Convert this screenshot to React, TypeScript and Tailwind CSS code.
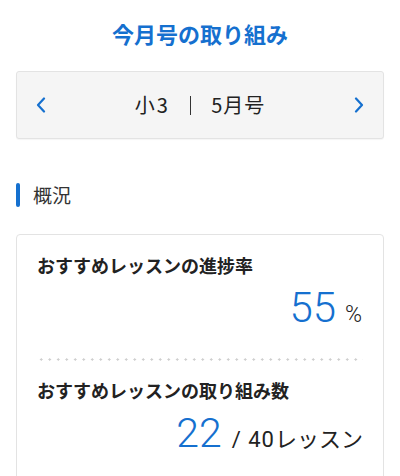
import React from 'react';

const jp = 'font-["Noto_Sans_CJK_JP","Noto_Sans",sans-serif]';
const num = 'font-["Roboto","Liberation_Sans",sans-serif]';

const Chevron: React.FC<{ dir: 'left' | 'right' }> = ({ dir }) => (
  <svg width="10" height="16" viewBox="0 0 10 16" fill="none">
    <polyline
      points={dir === 'left' ? '8,1.5 2,8 8,14.5' : '2,1.5 8,8 2,14.5'}
      stroke="#1570cf"
      strokeWidth="2.2"
      strokeLinecap="round"
      strokeLinejoin="round"
    />
  </svg>
);

const Stat: React.FC<{ label: string; children: React.ReactNode }> = ({ label, children }) => (
  <div>
    <div className={`${jp} text-[18px] font-bold leading-[26px] text-[#222]`}>{label}</div>
    {children}
  </div>
);

export default function App() {
  return (
    <div className={`${jp} min-h-[476px] w-[400px] bg-white px-4`}>
      <h1 className="pt-[17px] text-center text-[22px] font-bold leading-[32px] text-[#1570cf]">
        今月号の取り組み
      </h1>

      <div className="mt-[22px] flex h-[68px] items-center justify-between rounded-[3px] border border-[#e3e3e3] bg-[#f5f5f5] px-[19px] shadow-[0_1px_1px_rgba(0,0,0,0.04)]">
        <Chevron dir="left" />
        <div className="flex items-center gap-[20px] text-[20px] text-[#222]">
          <span className="tracking-[2px]">小3</span>
          <span className="h-[19px] w-[1.5px] bg-[#333]" />
          <span className="tracking-[1px]">5月号</span>
        </div>
        <Chevron dir="right" />
      </div>

      <div className="mt-[44px] flex items-center gap-[13px]">
        <span className="h-6 w-1 rounded-full bg-[#1570cf]" />
        <span className="text-[19px] leading-6 text-[#333]">概況</span>
      </div>

      <section className="mt-[27px] rounded-[4px] border border-[#e3e3e3] px-5 pt-[17px] pb-6">
        <Stat label="おすすめレッスンの進捗率">
          <div className="mt-[9px] flex items-baseline justify-end pr-[1px]">
            <span className={`${num} text-[42px] font-light leading-none text-[#1570cf]`}>55</span>
            <span className={`${num} ml-[9px] text-[23px] font-light text-[#222]`}>%</span>
          </div>
        </Stat>

        <div className="mt-[25px] h-[3px] bg-[radial-gradient(circle,#cfcfcf_1px,transparent_1.3px)] bg-[length:8.5px_3px]" />

        <div className="mt-[16px]">
          <Stat label="おすすめレッスンの取り組み数">
            <div className="mt-[10px] flex items-baseline justify-end">
              <span className={`${num} text-[41px] font-light leading-none text-[#1570cf]`}>22</span>
              <span className="ml-[10px] text-[22px] text-[#222]">
                <span className={`${num} tracking-[1px]`}>/ 40</span>レッスン
              </span>
            </div>
          </Stat>
        </div>
      </section>
    </div>
  );
}
